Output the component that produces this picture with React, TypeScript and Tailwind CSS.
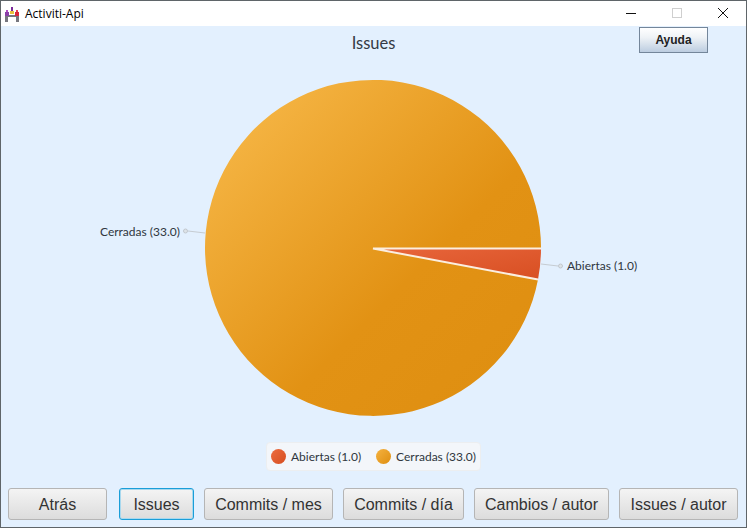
const BUTTONS = [
  { label: 'Atrás', width: 'w-[99px] mr-[2px]' },
  { label: 'Issues', width: 'w-[75px]', focused: true },
  { label: 'Commits / mes', width: 'w-[129px]' },
  { label: 'Commits / día', width: 'w-[121px]' },
  { label: 'Cambios / autor', width: 'w-[135px]' },
  { label: 'Issues / autor', width: 'w-[119px]' },
]

function AppIcon() {
  return (
    <svg width="16" height="16" viewBox="0 0 16 16" className="shrink-0">
      <path d="M1 16V9h14v7h-3v-5H4v5z" fill="#77777f" />
      <rect x="1" y="6" width="4" height="4" fill="#8a3fa8" />
      <rect x="6" y="5" width="4" height="3" fill="#e8c23a" />
      <rect x="11" y="6" width="4" height="4" fill="#d8263c" />
      <rect x="2" y="4" width="2" height="2" fill="#b04fc4" />
      <rect x="7" y="1" width="2" height="4" fill="#7a2a9a" />
      <rect x="12" y="4" width="2" height="2" fill="#e2404f" />
    </svg>
  )
}

function Pie() {
  return (
    <svg width="745" height="389" viewBox="0 0 745 389" className="block">
      <defs>
        <linearGradient id="orange" gradientUnits="userSpaceOnUse" x1="205" y1="80" x2="541" y2="416">
          <stop offset="0" stopColor="#f9bc4e" />
          <stop offset="0.6" stopColor="#e29214" />
          <stop offset="1" stopColor="#de8e10" />
        </linearGradient>
        <linearGradient id="red" x1="0" y1="0" x2="1" y2="1">
          <stop offset="0" stopColor="#e8663c" />
          <stop offset="1" stopColor="#d84f22" />
        </linearGradient>
      </defs>
      <g transform="translate(-1 -53)">
        <path d="M373 248.500 L538 279.500 A168 168 0 1 1 541 248.500 Z" fill="url(#orange)" />
        <path d="M373 248.500 L541 248.500 A168 168 0 0 1 538 279.500 Z" fill="url(#red)" />
        <path d="M541 248.500 L373 248.500 L538 279.500" stroke="#fbeee0" strokeWidth="2" fill="none" />
        <path d="M541 264 L558 266" stroke="#c6ccd2" strokeWidth="1" fill="none" />
        <circle cx="560.5" cy="266" r="2" fill="#dde3e8" stroke="#c2c8ce" />
        <path d="M205 233 L188 231" stroke="#c6ccd2" strokeWidth="1" fill="none" />
        <circle cx="185.5" cy="231" r="2" fill="#dde3e8" stroke="#c2c8ce" />
        <text x="567" y="270" className="text-[12px]" fill="#2f3640">
          Abiertas (1.0)
        </text>
        <text x="100" y="235.500" className="text-[12px]" fill="#2f3640">
          Cerradas (33.0)
        </text>
      </g>
    </svg>
  )
}

function LegendItem({ label, dot }: { label: string; dot: string }) {
  return (
    <div className="flex items-center gap-[5px]">
      <span className={`h-[15px] w-[15px] rounded-full ${dot}`} />
      <span className="pt-[1px] text-[12px] leading-none text-[#2f3640]">{label}</span>
    </div>
  )
}

export default function App() {
  return (
    <div className="flex h-[528px] w-[747px] flex-col overflow-hidden border border-[#5f6569] bg-[#e3f0fe] font-['Lato',sans-serif]">
      {/* Title bar */}
      <div className="flex h-[25px] shrink-0 items-center bg-white pl-[3px]">
        <AppIcon />
        <span className="ml-[5px] font-['Open_Sans',sans-serif] text-[12px] text-black">Activiti-Api</span>
        <div className="ml-auto flex items-center">
          <svg width="46" height="25" viewBox="0 0 46 25">
            <path d="M18 12.500h10" stroke="#111" strokeWidth="1" />
          </svg>
          <svg width="46" height="25" viewBox="0 0 46 25">
            <rect x="18.500" y="7.500" width="9" height="9" fill="none" stroke="#cfcfcf" />
          </svg>
          <svg width="46" height="25" viewBox="0 0 46 25">
            <path d="M18 7l10 10M28 7l-10 10" stroke="#111" strokeWidth="1" fill="none" />
          </svg>
        </div>
      </div>

      <div className="relative flex flex-1 flex-col">
        {/* Help */}
        <button className="absolute right-[38px] top-[1px] h-[26px] w-[69px] border border-[#74869a] bg-[linear-gradient(#ffffff,#eef2f6_40%,#bccde0)] font-['Liberation_Sans',sans-serif] text-[12px] font-bold text-[#222]">
          Ayuda
        </button>

        <div className="mt-[7px] h-[20px] text-center text-[16.5px] leading-[20px] text-[#333a44]">Issues</div>

        <Pie />

        {/* Legend */}
        <div className="mx-auto flex h-[29px] w-[215px] items-center justify-center gap-[15px] rounded-[4px] border border-[#eceef0] bg-[#f3f6fa]">
          <LegendItem label="Abiertas (1.0)" dot="bg-[linear-gradient(135deg,#ec6c40,#d64e20)]" />
          <LegendItem label="Cerradas (33.0)" dot="bg-[linear-gradient(135deg,#f5b240,#de8e10)]" />
        </div>

        {/* Actions */}
        <div className="mt-[17px] flex gap-[10px] pl-[7px]">
          {BUTTONS.map((button) => (
            <button
              key={button.label}
              className={`h-[32px] rounded-[3px] border bg-[linear-gradient(#f4f4f4,#dcdcdc)] pt-[1px] font-['Liberation_Sans',sans-serif] text-[16px] text-[#333] ${button.width} ${
                button.focused ? 'border-[#1a9ed8] shadow-[inset_0_0_0_1px_#a8d8ee]' : 'border-[#b5b5b5]'
              }`}
            >
              {button.label}
            </button>
          ))}
        </div>
      </div>
    </div>
  )
}
